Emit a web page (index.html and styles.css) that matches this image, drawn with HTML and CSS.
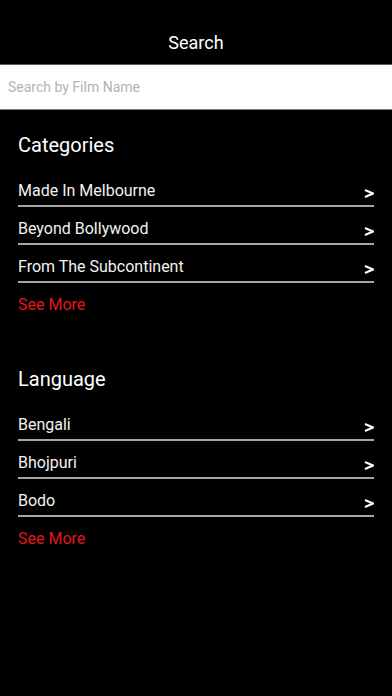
FILE: index.html
```
<!DOCTYPE html>
<html>
<head>
<meta charset="utf-8">
<link rel="stylesheet" href="styles.css">
</head>
<body>
<div class="screen">
  <header class="topbar">Search</header>
  <div class="searchbox">
    <input class="search-input" type="text" placeholder="Search by Film Name">
  </div>
  <section class="group group-first">
    <h2 class="group-title">Categories</h2>
    <ul class="list">
      <li class="row"><span class="row-label">Made In Melbourne</span><svg class="chev" width="10" height="9" viewBox="0 0 10 9"><polyline points="1,1 9,4.5 1,8" fill="none" stroke="#fff" stroke-width="2"/></svg></li>
      <li class="row"><span class="row-label">Beyond Bollywood</span><svg class="chev" width="10" height="9" viewBox="0 0 10 9"><polyline points="1,1 9,4.5 1,8" fill="none" stroke="#fff" stroke-width="2"/></svg></li>
      <li class="row"><span class="row-label">From The Subcontinent</span><svg class="chev" width="10" height="9" viewBox="0 0 10 9"><polyline points="1,1 9,4.5 1,8" fill="none" stroke="#fff" stroke-width="2"/></svg></li>
    </ul>
    <a class="see-more">See More</a>
  </section>
  <section class="group group-second">
    <h2 class="group-title">Language</h2>
    <ul class="list">
      <li class="row"><span class="row-label">Bengali</span><svg class="chev" width="10" height="9" viewBox="0 0 10 9"><polyline points="1,1 9,4.5 1,8" fill="none" stroke="#fff" stroke-width="2"/></svg></li>
      <li class="row"><span class="row-label">Bhojpuri</span><svg class="chev" width="10" height="9" viewBox="0 0 10 9"><polyline points="1,1 9,4.5 1,8" fill="none" stroke="#fff" stroke-width="2"/></svg></li>
      <li class="row"><span class="row-label">Bodo</span><svg class="chev" width="10" height="9" viewBox="0 0 10 9"><polyline points="1,1 9,4.5 1,8" fill="none" stroke="#fff" stroke-width="2"/></svg></li>
    </ul>
    <a class="see-more">See More</a>
  </section>
</div>
</body>
</html>
```
FILE: styles.css
```
* { box-sizing: border-box; }
html, body {
  margin: 0;
  padding: 0;
  background: #000;
}
body {
  font-family: Roboto, "Noto Sans", Arial, sans-serif;
  color: #fff;
  width: 392px;
  height: 696px;
  overflow: hidden;
}
.screen {
  display: flex;
  flex-direction: column;
}
.topbar {
  padding-top: 21px;
  height: 64px;
  line-height: 43px;
  font-size: 18px;
  text-align: center;
  color: #fff;
}
.searchbox {
  background: #fff;
  border-top: 1px solid #5a5a5a;
  border-bottom: 1px solid #7a7a7a;
  height: 46px;
}
.search-input {
  display: block;
  width: 100%;
  height: 44px;
  border: 0;
  outline: none;
  padding: 0 8px;
  font-family: Roboto, "Noto Sans", Arial, sans-serif;
  font-size: 14px;
  background: #fff;
  color: #333;
}
.search-input::placeholder {
  color: #b3b3b3;
}
.group {
  padding: 0 18px;
}
.group-first { margin-top: 23px; }
.group-second { margin-top: 53px; }
.group-title {
  margin: 0;
  font-size: 20px;
  line-height: 24px;
  font-weight: 400;
  color: #fff;
}
.list {
  list-style: none;
  margin: 12px 0 0;
  padding: 0;
}
.row {
  display: flex;
  justify-content: space-between;
  align-items: flex-end;
  height: 38px;
  padding-bottom: 5px;
  border-bottom: 2px solid #a6a6a6;
}
.row-label {
  font-size: 16px;
  line-height: 19px;
  color: #f2f2f2;
}
.chev {
  display: block;
  margin-bottom: 2px;
  margin-right: 0;
}
.see-more {
  display: block;
  margin-top: 12px;
  font-size: 16px;
  line-height: 19px;
  color: #e3161b;
}
```
